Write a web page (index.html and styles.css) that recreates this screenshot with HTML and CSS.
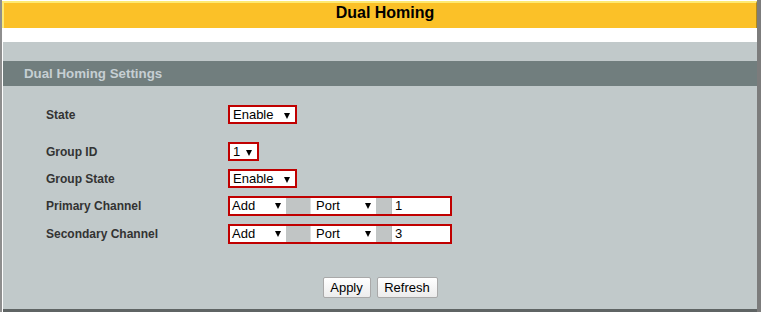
FILE: index.html
```html
<!DOCTYPE html>
<html lang="en">
<head>
    <meta charset="UTF-8">
    <title>Dual Homing</title>
    <link rel="stylesheet" href="styles.css">
</head>
<body>
    <div class="frame">
        <div class="topbar">Dual Homing</div>

        <div class="panel">
            <div class="panel-title">Dual Homing Settings</div>

            <!-- settings rows -->
            <div class="form">
                <div class="row row-state">
                    <span class="label">State</span>
                    <span class="sel sel-enable">Enable<i class="arrow"></i></span>
                </div>
                <div class="row">
                    <span class="label">Group ID</span>
                    <span class="sel sel-id">1<i class="arrow"></i></span>
                </div>
                <div class="row">
                    <span class="label">Group State</span>
                    <span class="sel sel-enable">Enable<i class="arrow"></i></span>
                </div>
                <div class="row row-tall">
                    <span class="label">Primary Channel</span>
                    <span class="channel">
                        <span class="cell cell-add">Add<i class="arrow"></i></span>
                        <span class="gap gap-wide"></span>
                        <span class="cell cell-port">Port<i class="arrow"></i></span>
                        <span class="gap"></span>
                        <span class="cell cell-input">1</span>
                    </span>
                </div>
                <div class="row">
                    <span class="label">Secondary Channel</span>
                    <span class="channel">
                        <span class="cell cell-add">Add<i class="arrow"></i></span>
                        <span class="gap gap-wide"></span>
                        <span class="cell cell-port">Port<i class="arrow"></i></span>
                        <span class="gap"></span>
                        <span class="cell cell-input">3</span>
                    </span>
                </div>
            </div>

            <div class="actions">
                <button type="button" class="btn btn-apply">Apply</button>
                <button type="button" class="btn btn-refresh">Refresh</button>
            </div>
        </div>
    </div>
</body>
</html>
```

FILE: styles.css
```css
/* base */
body {
    margin: 0;
    background: #fff;
    font-family: "Liberation Sans", Arial, sans-serif;
}

/* outer frame */
.frame {
    width: 761px;
    height: 312px;
    box-sizing: border-box;
    border-left: 2px solid #8e8e8e;
    border-right: 4px solid #7c7c7c;
    overflow: hidden;
}

/* yellow title bar */
.topbar {
    margin-top: 1px;
    height: 27px;
    box-sizing: border-box;
    padding-left: 10px;
    border-top: 2px solid #fdea74;
    border-left: 2px solid #fdea74;
    border-right: 1px solid #b08a1c;
    background: #fbc128;
    line-height: 20px;
    text-align: center;
    font-size: 16px;
    font-weight: bold;
    color: #000;
}

/* grey panel */
.panel {
    margin: 14px 0 0 1px;
    height: 270px;
    box-sizing: border-box;
    padding-top: 19px;
    background: #c1c9ca;
    border-bottom: 3px solid #5f6464;
}

.panel-title {
    height: 25px;
    line-height: 25px;
    padding-left: 21px;
    background: #717e7e;
    color: #c6cfd3;
    font-size: 13.3px;
    font-weight: bold;
}

.form {
    padding-top: 15px;
}

.row {
    display: grid;
    grid-template-columns: 182px auto;
    align-items: center;
    height: 27px;
    padding-left: 43px;
}

.row-state {
    margin-bottom: 10px;
}

.row-tall {
    height: 28px;
}

.label {
    font-size: 12px;
    font-weight: bold;
    color: #333;
}

/* fake selects */
.sel {
    position: relative;
    display: block;
    height: 19px;
    box-sizing: border-box;
    border: 2px solid #c00000;
    background: #fff;
    padding-left: 3px;
    font-size: 13px;
    line-height: 15px;
    color: #000;
}

.sel-enable { width: 69px; }
.sel-id { width: 31px; }

.arrow {
    position: absolute;
    top: 6px;
    right: 5px;
    width: 0;
    height: 0;
    border-left: 3.5px solid transparent;
    border-right: 3.5px solid transparent;
    border-top: 6px solid #000;
}

/* channel composite */
.channel {
    display: flex;
    width: 224px;
    height: 20px;
    box-sizing: border-box;
    border: 2px solid #c00000;
    background: #fff;
}

.cell {
    position: relative;
    display: block;
    height: 16px;
    box-sizing: border-box;
    font-size: 13px;
    line-height: 16px;
    color: #000;
    background: #fff;
}

.cell-add { width: 56px; padding-left: 2px; }
.cell-port { width: 66px; padding-left: 5px; border-left: 1px solid #dcdfdf; }
.cell-input { flex: 1; padding-left: 3px; border-left: 1px solid #b8bcbc; }

.cell .arrow { top: 5px; }

.gap {
    width: 15px;
    background: #c1c5c5;
}

.gap-wide {
    width: 24px;
}

/* buttons */
.actions {
    display: flex;
    justify-content: center;
    gap: 6px;
    margin-top: 30px;
}

.btn {
    height: 21px;
    box-sizing: border-box;
    padding: 0;
    border: 1px solid #a9a9a9;
    border-radius: 2px;
    background: linear-gradient(#ffffff, #ececec);
    font-family: "Liberation Sans", Arial, sans-serif;
    font-size: 13px;
    color: #000;
}

.btn-apply { width: 48px; }
.btn-refresh { width: 61px; }
```
